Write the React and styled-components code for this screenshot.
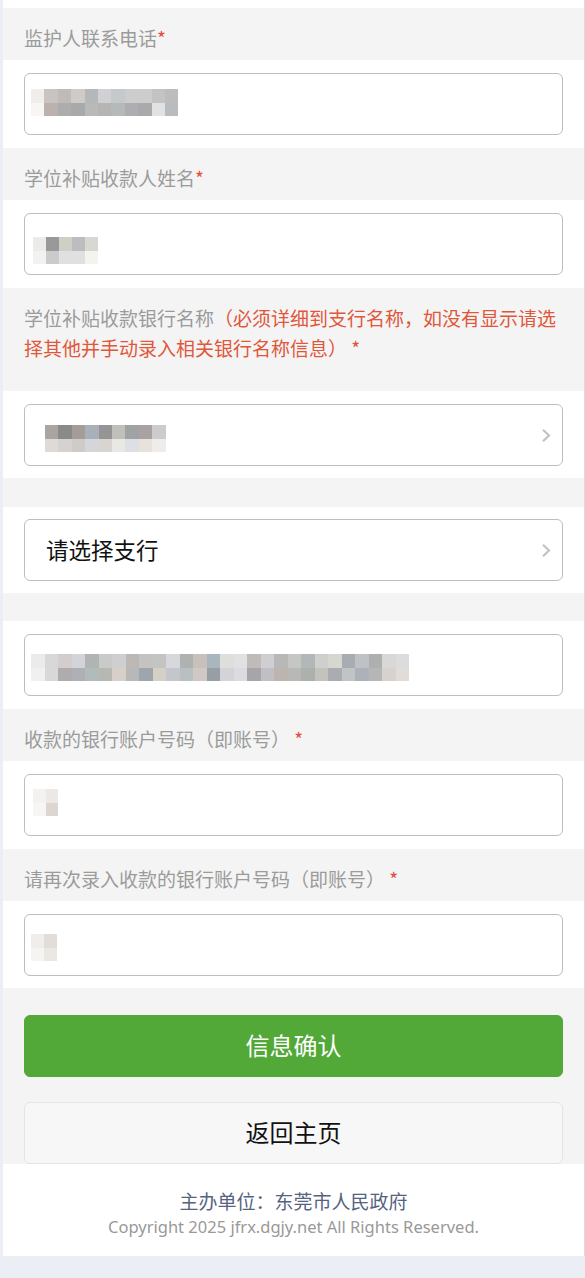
import React from "react"
import styled, { createGlobalStyle } from "styled-components"

const GlobalStyle = createGlobalStyle`
  html, body {
    margin: 0;
    padding: 0;
    background: #eceef5;
  }
  body {
    font-family: "Noto Sans CJK SC", "Noto Sans", sans-serif;
  }
`

const Page = styled.div`
  margin-left: 3px;
  width: 581px;
  background: #f4f4f4;
  border-right: 1px solid #dcdcdc;
`

const TopGap = styled.div`
  height: 8px;
  background: #fff;
`

const LabelRow = styled.div`
  background: #f4f4f4;
  padding: 15px 21px ${(p) => (p.$tall ? "28px" : "7px")};
  font-size: 19px;
  line-height: 30px;
  color: #9b9b9b;
`

const Star = styled.span`
  color: #e0503c;
`

const Note = styled.span`
  color: #e0573a;
`

const Spacer = styled.div`
  height: ${(p) => p.$h || 28}px;
  background: #f4f4f4;
`

const FieldRow = styled.div`
  background: #fff;
  padding: ${(p) => p.$top ?? 13}px 21px ${(p) => p.$bottom ?? 13}px;
`

const Field = styled.div`
  position: relative;
  box-sizing: border-box;
  height: 62px;
  border: 1px solid #bdbdbd;
  border-radius: 6px;
  background: #fff;
  display: flex;
  align-items: center;
  padding: 0 17px 2px 21px;
  font-size: 22.5px;
  color: #111;
`

const SelectText = styled.span`
  flex: 1;
`

const Chevron = styled.svg`
  position: absolute;
  right: 11px;
  top: 50%;
  margin-top: -7px;
  width: 10px;
  height: 15px;
`

const Mosaic = styled.div`
  position: absolute;
  left: ${(p) => p.$left}px;
  top: ${(p) => p.$top}px;
  display: grid;
  grid-template-columns: repeat(${(p) => p.$cols}, ${(p) => p.$cell}px);
  grid-auto-rows: ${(p) => p.$rowH}px;
`

const Cell = styled.div`
  background: ${(p) => p.$c};
`

const Actions = styled.div`
  background: #f4f4f4;
  padding: 27px 21px 0;
  display: flex;
  flex-direction: column;
  gap: 25px;
`

const Button = styled.button`
  box-sizing: border-box;
  height: 62px;
  width: 100%;
  padding: 0 0 4px;
  border-radius: 6px;
  font-family: "Noto Sans CJK SC", sans-serif;
  font-size: 24px;
  cursor: pointer;
  border: 1px solid ${(p) => (p.$primary ? "#52a938" : "#e4e4e4")};
  background: ${(p) => (p.$primary ? "#52a938" : "#f7f7f7")};
  color: ${(p) => (p.$primary ? "#fff" : "#111")};
`

const Footer = styled.div`
  background: #fff;
  padding: 24px 0 16px;
  text-align: center;
  line-height: 26px;
`

const Sponsor = styled.div`
  font-size: 19px;
  color: #56637f;
`

const Copyright = styled.div`
  font-family: "Noto Sans", sans-serif;
  font-size: 16.5px;
  color: #999;
`

const Blur = ({ left, top, cell = 13.4, rowH = 13.5, rows }) => (
  <Mosaic $left={left} $top={top} $cols={rows[0].length} $cell={cell} $rowH={rowH}>
    {rows.flat().map((c, i) => (
      <Cell key={i} $c={c} />
    ))}
  </Mosaic>
)

const ArrowRight = () => (
  <Chevron viewBox="0 0 10 15">
    <polyline points="2,1.8 8,7.5 2,13.2" fill="none" stroke="#c2c2c2" strokeWidth="2.2" />
  </Chevron>
)

const phone = [
  ["#f0eeec", "#c9c4c1", "#bfbbb8", "#cfcbc8", "#b4b8ba", "#d1d0d4", "#c5c9cb", "#cfcdcb", "#cdcdcd", "#c3c3c3", "#bdbdbd"],
  ["#f7f6f4", "#bbb1ad", "#adadad", "#a8a9aa", "#b9b9b9", "#b7b5b3", "#b5bab9", "#aeaeb2", "#a8aaab", "#e2e2e2", "#b9bcbf"],
]

const name = [
  ["#ebebe9", "#999999", "#cfcfc6", "#bdbdbf", "#d8d8d3"],
  ["#f2f2f0", "#cbcbcb", "#e0e0e0", "#e0e0e0", "#f4f4ef"],
]

const bank = [
  ["#aba5a2", "#8a8a8a", "#a39c98", "#a9b0ba", "#959595", "#bec0b9", "#a0a3a4", "#a8a3a0", "#cccccc"],
  ["#dedad8", "#d5d2d0", "#cfcbc9", "#d4d6dc", "#d8d4d0", "#e9e8e4", "#dcdfe3", "#e8e2dc", "#eeedeb"],
]

const bankFull = [
  ["#ebebeb", "#d8d8d8", "#d3cdcd", "#d2d4da", "#b0b5b4", "#cacaca", "#cfcfd1", "#beb8b5", "#c4c3c1", "#c4c4c2", "#d7d8dc", "#b0b2b1", "#c8c0bb", "#a8b6c0", "#e0dedb", "#e1e1e3", "#c0bbba", "#cfcfd3", "#b8b8b8", "#c6c6c4", "#b2b8b8", "#cfcfcd", "#d8d6d1", "#a8acb3", "#bec2c4", "#aeb0b0", "#d8d8d6", "#dcdcdc"],
  ["#f0f0f0", "#d8d8d8", "#b0abaf", "#aeb0b5", "#b2bbbb", "#b8b8b3", "#d8d0c8", "#b8b8b8", "#9ea5ac", "#d4d0c6", "#c4c6cc", "#b8c0c2", "#d0c8c4", "#979ea4", "#d3d3d8", "#dcdcdf", "#a8a5aa", "#c0bfc5", "#bcb4ae", "#b8b8b6", "#adb1ad", "#c4c2bd", "#a9acb1", "#c0c4c4", "#adb2ba", "#b6b6b8", "#d8d2ce", "#e0dcd8"],
]

const account = [
  ["#f4f2f0", "#ebe8e5"],
  ["#f8f6f4", "#ddd5cf"],
]

const account2 = [
  ["#f0eeec", "#e2ddd9"],
  ["#f6f4f2", "#ebe7e3"],
]

export default function App() {
  return (
    <>
      <GlobalStyle />
      <Page>
        <TopGap />
        <LabelRow>
          监护人联系电话<Star>*</Star>
        </LabelRow>
        <FieldRow>
          <Field>
            <Blur left={6} top={15} rows={phone} />
          </Field>
        </FieldRow>

        <LabelRow>
          学位补贴收款人姓名<Star>*</Star>
        </LabelRow>
        <FieldRow>
          <Field>
            <Blur left={8} top={23} cell={13} rows={name} />
          </Field>
        </FieldRow>

        <LabelRow $tall>
          学位补贴收款银行名称<Note>（必须详细到支行名称，如没有显示请选择其他并手动录入相关银行名称信息）</Note>
          <Star> *</Star>
        </LabelRow>
        <FieldRow $bottom={12}>
          <Field>
            <Blur left={20} top={20} rows={bank} />
            <ArrowRight />
          </Field>
        </FieldRow>

        <Spacer $h={29} />
        <FieldRow $top={12} $bottom={12}>
          <Field>
            <SelectText>请选择支行</SelectText>
            <ArrowRight />
          </Field>
        </FieldRow>

        <Spacer />
        <FieldRow>
          <Field>
            <Blur left={6} top={19} cell={13.5} rows={bankFull} />
          </Field>
        </FieldRow>

        <LabelRow>
          收款的银行账户号码（即账号）<Star> *</Star>
        </LabelRow>
        <FieldRow>
          <Field>
            <Blur left={8} top={14} cell={12.5} rows={account} />
          </Field>
        </FieldRow>

        <LabelRow>
          请再次录入收款的银行账户号码（即账号）<Star> *</Star>
        </LabelRow>
        <FieldRow $bottom={12}>
          <Field>
            <Blur left={6} top={19} cell={13} rows={account2} />
          </Field>
        </FieldRow>

        <Actions>
          <Button $primary>信息确认</Button>
          <Button>返回主页</Button>
        </Actions>

        <Footer>
          <Sponsor>主办单位：东莞市人民政府</Sponsor>
          <Copyright>Copyright 2025 jfrx.dgjy.net All Rights Reserved.</Copyright>
        </Footer>
      </Page>
    </>
  )
}
